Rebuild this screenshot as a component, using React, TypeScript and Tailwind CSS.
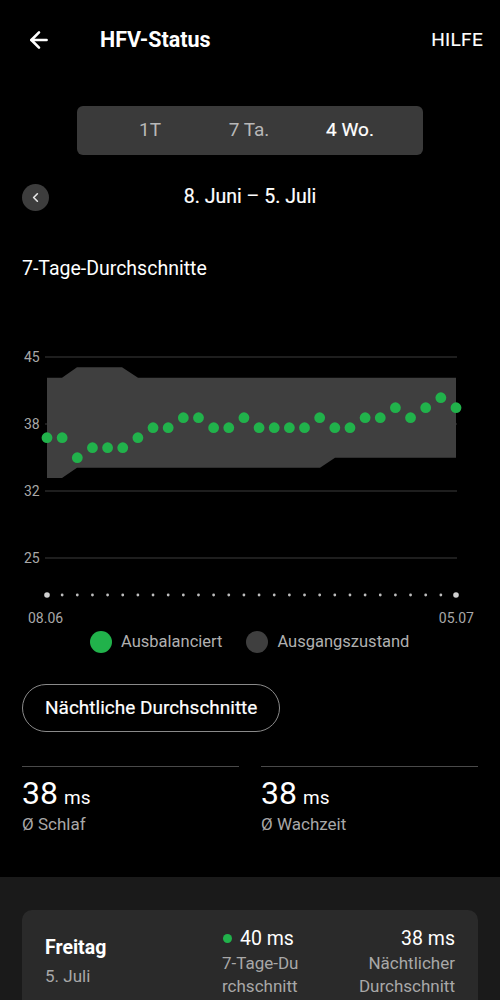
import { ArrowLeft, ChevronLeft } from 'lucide-react';

const xs = Array.from({ length: 28 }, (_, i) => 47 + i * (409 / 27));
const ys = [
  97.7, 97.7, 117.7, 107.7, 107.7, 107.7, 97.7, 87.7, 87.7, 77.7, 77.7, 87.7, 87.7, 77.7,
  87.7, 87.7, 87.7, 87.7, 77.7, 87.7, 87.7, 77.7, 77.7, 67.7, 77.7, 67.7, 57.7, 67.7,
];

const gridLines = [
  { y: 17, label: '45' },
  { y: 84, label: '38' },
  { y: 151, label: '32' },
  { y: 218, label: '25' },
];

function Chart() {
  const font = 'Roboto, "Liberation Sans", sans-serif';
  return (
    <svg width="500" height="290" viewBox="0 0 500 290" className="block">
      {gridLines.map((g) => (
        <g key={g.label}>
          <line x1="45" x2="457" y1={g.y} y2={g.y} stroke="#3c3c3c" strokeWidth="1.2" />
          <text x="24" y={g.y + 5} fill="#a8a8a8" fontSize="14" fontFamily={font}>
            {g.label}
          </text>
        </g>
      ))}
      <polygon
        points="47,37.7 62,37.7 77,27.3 122,27.3 138,37.7 456,37.7 456,117.7 335,117.7 320,127.7 77,127.7 62,138 47,138"
        fill="#3f3f3f"
      />
      {xs.map((x, i) => (
        <circle key={i} cx={x} cy={ys[i]} r="5.4" fill="#21b24b" />
      ))}
      {xs.map((x, i) => (
        <circle
          key={'a' + i}
          cx={x}
          cy="255"
          r={i === 0 || i === 27 ? 2.8 : 1.4}
          fill={i === 0 || i === 27 ? '#d0d0d0' : '#bdbdbd'}
        />
      ))}
      <text x="28" y="283" fill="#a8a8a8" fontSize="14" fontFamily={font}>
        08.06
      </text>
      <text x="474" y="283" fill="#a8a8a8" fontSize="14" fontFamily={font} textAnchor="end">
        05.07
      </text>
    </svg>
  );
}

export default function App() {
  return (
    <div className="w-[500px] h-[1000px] overflow-hidden bg-black text-white font-['Roboto','Liberation_Sans',sans-serif]">
      <header className="h-[80px] flex items-center pl-[26px] pr-[17px]">
        <ArrowLeft size={26} strokeWidth={2.4} className="text-white" />
        <h1 className="ml-[48px] text-[21.5px] font-bold">HFV-Status</h1>
        <span className="ml-auto text-[19px] tracking-[0.3px] [-webkit-text-stroke:0.15px_white]">HILFE</span>
      </header>

      <div className="mt-[26px] mx-[77px] h-[49px] rounded-[6px] bg-[#3a3a3a] flex items-center text-[19px]">
        <span className="ml-[43px] w-[60px] text-center text-[#b8b8b8]">1T</span>
        <span className="ml-[39px] w-[60px] text-center text-[#b8b8b8]">7 Ta.</span>
        <span className="ml-[41px] w-[60px] text-center text-white [-webkit-text-stroke:0.2px_white]">4 Wo.</span>
      </div>

      <div className="mt-[28px] h-[28px] px-[22px] flex items-center relative">
        <div className="w-[27px] h-[27px] rounded-full bg-[#3d3d3d] flex items-center justify-center">
          <ChevronLeft size={15} strokeWidth={2.6} className="text-[#e5e5e5]" />
        </div>
        <span className="absolute left-0 right-0 text-center text-[19.5px] pointer-events-none [-webkit-text-stroke:0.2px_white]">
          8. Juni – 5. Juli
        </span>
      </div>

      <h2 className="mt-[46px] px-[22px] text-[19.5px] leading-[24px]">7-Tage-Durchschnitte</h2>

      <div className="mt-[59px]">
        <Chart />
      </div>

      <div className="flex items-center h-[24px]">
        <span className="ml-[90px] w-[22px] h-[22px] rounded-full bg-[#21b24b]" />
        <span className="ml-[9px] text-[16.5px] text-[#b0b0b0]">Ausbalanciert</span>
        <span className="ml-[24px] w-[22px] h-[22px] rounded-full bg-[#3f3f3f]" />
        <span className="ml-[9px] text-[16.5px] text-[#b0b0b0]">Ausgangszustand</span>
      </div>

      <div className="mt-[30px] px-[22px]">
        <button className="h-[48px] px-[22px] rounded-full border border-[#8a8a8a] text-[19px] text-white [-webkit-text-stroke:0.2px_white]">
          Nächtliche Durchschnitte
        </button>
      </div>

      <div className="mt-[34px] px-[22px] grid grid-cols-2 gap-[22px]">
        {['Schlaf', 'Wachzeit'].map((l) => (
          <div key={l} className="border-t border-[#4a4a4a] pt-[7px]">
            <div className="flex items-baseline">
              <span className="text-[32px] leading-[38px]">38</span>
              <span className="ml-[6px] text-[19px]">ms</span>
            </div>
            <div className="text-[17px] leading-[22px] text-[#a8a8a8]">Ø {l}</div>
          </div>
        ))}
      </div>

      <div className="mt-[42px] bg-[#1a1a1a] pt-[33px] px-[22px] h-[200px]">
        <div className="rounded-[10px] bg-[#2a2a2a] flex pl-[23px] pr-[23px] pt-[16px] pb-[20px]">
          <div className="w-[177px] pt-[9px]">
            <div className="text-[19.5px] font-bold leading-[26px]">Freitag</div>
            <div className="mt-[4px] text-[17px] leading-[22px] text-[#a8a8a8]">5. Juli</div>
          </div>
          <div className="w-[78px]">
            <div className="flex items-center h-[26px]">
              <span className="ml-[1px] w-[9px] h-[9px] rounded-full bg-[#21b24b]" />
              <span className="ml-[8px] text-[19.5px]">40 ms</span>
            </div>
            <div className="text-[17px] leading-[23px] text-[#a8a8a8] break-all">7-Tage-Durchschnitt</div>
          </div>
          <div className="flex-1 text-right">
            <div className="h-[26px] text-[19.5px] leading-[26px]">38 ms</div>
            <div className="text-[17px] leading-[23px] text-[#a8a8a8]">
              Nächtlicher
              <br />
              Durchschnitt
            </div>
          </div>
        </div>
      </div>
    </div>
  );
}
